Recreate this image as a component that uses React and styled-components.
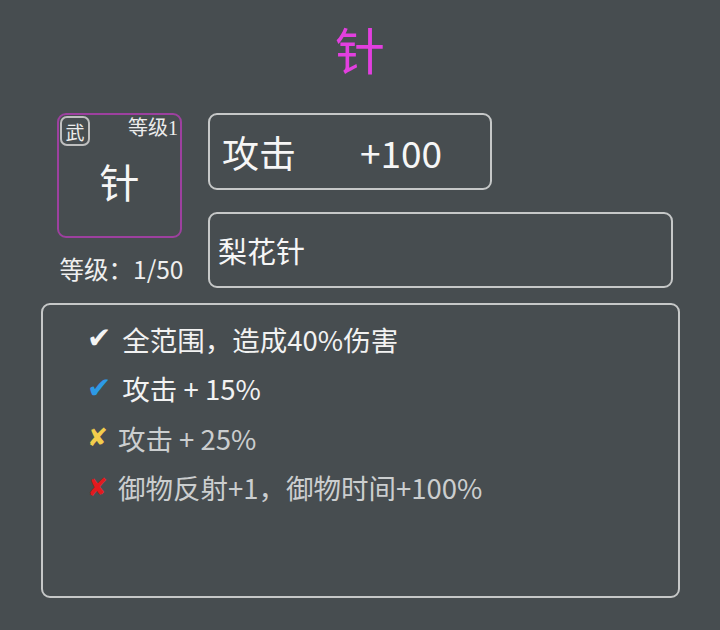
import React from 'react'
import styled, { createGlobalStyle } from 'styled-components'

const CJK = `"Noto Sans CJK SC", "Noto Sans", sans-serif`

const weapon = {
  name: '针',
  fullName: '梨花针',
  type: '武',
  grade: 1,
  level: '1/50',
  stat: '攻击',
  value: '+100'
}

const effects = [
  { icon: '✔', color: '#f4f4f4', text: '全范围，造成40%伤害', on: true },
  { icon: '✔', color: '#2d9ae6', text: '攻击 + 15%', on: true },
  { icon: '✘', color: '#f2cd4c', text: '攻击 + 25%', on: false },
  { icon: '✘', color: '#e21a1e', text: '御物反射+1，御物时间+100%', on: false }
]

const GlobalStyle = createGlobalStyle`
  body {
    margin: 0;
    background: #474d50;
    font-family: ${CJK};
  }
`

const Page = styled.div`
  width: 720px;
  height: 630px;
  box-sizing: border-box;
  padding-left: 41px;
  background: #474d50;
  color: #f2f2f2;
`

const Title = styled.h1`
  margin: 0 0 13px -41px;
  height: 100px;
  line-height: 96px;
  text-align: center;
  font-size: 50px;
  font-weight: 400;
  color: #e23fdf;
`

const TopRow = styled.div`
  display: flex;
  padding-left: 16px;
  gap: 26px;
`

const LeftCol = styled.div`
  width: 125px;
  display: flex;
  flex-direction: column;
  align-items: center;
`

const Card = styled.div`
  position: relative;
  width: 125px;
  height: 125px;
  box-sizing: border-box;
  border: 2px solid #9d409f;
  border-radius: 9px;
  padding-top: 10px;
  display: flex;
  align-items: center;
  justify-content: center;
  font-size: 40px;
  color: #f6f6f6;
`

const TypeBadge = styled.span`
  position: absolute;
  top: 1px;
  left: 1px;
  width: 30px;
  height: 30px;
  box-sizing: border-box;
  border: 2px solid #bfbfbf;
  border-radius: 7px;
  display: flex;
  align-items: center;
  justify-content: center;
  font-size: 19px;
  color: #ececec;
`

const Grade = styled.span`
  position: absolute;
  top: 1px;
  right: 2px;
  font-family: "Liberation Serif", "Noto Sans CJK SC", serif;
  font-size: 20px;
  line-height: 24px;
  color: #ececec;
`

const LevelText = styled.div`
  margin-top: 16px;
  margin-left: 4px;
  white-space: nowrap;
  font-size: 24.5px;
  line-height: 30px;
  color: #efefef;
`

const RightCol = styled.div`
  display: flex;
  flex-direction: column;
  gap: 22px;
`

const InfoBox = styled.div`
  width: ${p => p.$w}px;
  height: ${p => p.$h}px;
  box-sizing: border-box;
  border: 2px solid #c6c8c8;
  border-radius: 9px;
  display: flex;
  align-items: center;
  padding-left: ${p => p.$pad}px;
  font-size: ${p => p.$size}px;
  color: #f6f6f6;
  white-space: nowrap;
`

const StatValue = styled.span`
  margin-left: 64px;
`

const EffectBox = styled.div`
  margin-top: 15px;
  width: 639px;
  height: 295px;
  box-sizing: border-box;
  border: 2px solid #c6c8c8;
  border-radius: 9px;
  padding: 9px 0 0 44px;
`

const Effect = styled.div`
  display: flex;
  align-items: center;
  height: 49.5px;
  font-size: 27.5px;
  color: ${p => (p.$on ? '#f2f2f2' : '#cbcecf')};
`

const Mark = styled.span`
  font-family: "DejaVu Sans", sans-serif;
  font-size: ${p => (p.$on ? 29 : 25)}px;
  line-height: 1;
  color: ${p => p.$color};
  margin-right: ${p => (p.$on ? 11 : 10)}px;
`

export default function App() {
  return (
    <Page>
      <GlobalStyle />
      <Title>{weapon.name}</Title>
      <TopRow>
        <LeftCol>
          <Card>
            <TypeBadge>{weapon.type}</TypeBadge>
            <Grade>等级{weapon.grade}</Grade>
            {weapon.name}
          </Card>
          <LevelText>等级：{weapon.level}</LevelText>
        </LeftCol>
        <RightCol>
          <InfoBox $w={284} $h={77} $pad={12} $size={37}>
            {weapon.stat}
            <StatValue>{weapon.value}</StatValue>
          </InfoBox>
          <InfoBox $w={465} $h={76} $pad={8} $size={29}>
            {weapon.fullName}
          </InfoBox>
        </RightCol>
      </TopRow>
      <EffectBox>
        {effects.map((e, i) => (
          <Effect key={i} $on={e.on}>
            <Mark $on={e.on} $color={e.color}>{e.icon}</Mark>
            {e.text}
          </Effect>
        ))}
      </EffectBox>
    </Page>
  )
}
